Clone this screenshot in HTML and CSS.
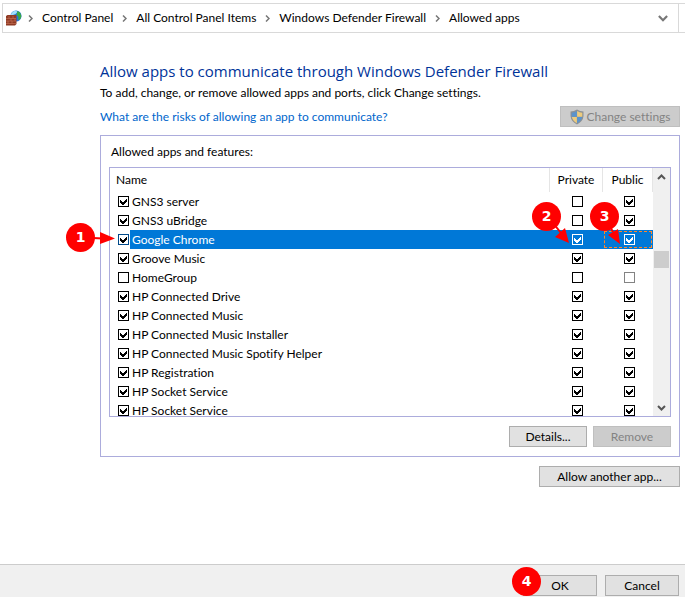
FILE: index.html
```html
<!DOCTYPE html>
<html lang="en">
<head>
<meta charset="utf-8">
<title>Allowed apps</title>
<link rel="stylesheet" href="styles.css">
</head>
<body>
<header class="topbar">
  <nav class="address" aria-label="Breadcrumb">
    <svg class="app-icon" viewBox="0 0 16 16" aria-hidden="true">
      <circle cx="10" cy="6" r="5.5" fill="#2474d8"/>
      <path d="M5.500 3Q7.500 .7 10 .6L11.500 2 9.500 4 7 5H4.800Z" fill="#9fe0fa"/>
      <path d="M11.500 1l2.500 1.500 1.400 3.500-1 3-2.400 1 .5-3-2-2Z" fill="#3aa845"/>
      <path d="M0 6l1.500-1h9v9L9 15.500H0Z" fill="#8f3a24"/>
      <path d="M0 8.500h10M0 11h10M0 13.500h10M3 6v2.500M7 6v2.500M5 8.500V11M9 8.500V11M2 11v2.500M6 11v2.500" stroke="#c9765a" stroke-width=".6"/>
    </svg>
    <svg class="sep" viewBox="0 0 5 7" aria-hidden="true"><path d="M1 .5l3 3-3 3"/></svg>
    <a href="#">Control Panel</a>
    <svg class="sep" viewBox="0 0 5 7" aria-hidden="true"><path d="M1 .5l3 3-3 3"/></svg>
    <a href="#">All Control Panel Items</a>
    <svg class="sep" viewBox="0 0 5 7" aria-hidden="true"><path d="M1 .5l3 3-3 3"/></svg>
    <a href="#">Windows Defender Firewall</a>
    <svg class="sep" viewBox="0 0 5 7" aria-hidden="true"><path d="M1 .5l3 3-3 3"/></svg>
    <a href="#">Allowed apps</a>
    <button class="history" aria-label="Previous locations"><svg viewBox="0 0 9 6" aria-hidden="true"><path d="M.8 .8l3.700 3.700L8.200 .8"/></svg></button>
  </nav>
  <div class="refresh"></div>
</header>

<main class="content">
  <h1>Allow apps to communicate through Windows Defender Firewall</h1>
  <p class="intro">To add, change, or remove allowed apps and ports, click Change settings.</p>
  <div class="risk-row">
    <a class="risk-link" href="#">What are the risks of allowing an app to communicate?</a>
    <button class="btn change" disabled>
      <svg class="shield" viewBox="0 0 16 16" aria-hidden="true">
        <path d="M8 .5Q11 2.500 14.500 2.500V7Q14 12.500 8 15.500 2 12.500 1.500 7V2.500Q5 2.500 8 .5Z" fill="#8b9095"/>
        <path d="M7.900 2Q5.500 3.500 2.700 3.700V7.800H7.900Z" fill="#5a93cc"/>
        <path d="M8.100 2Q10.500 3.500 13.300 3.700V7.800H8.100Z" fill="#edcb7d"/>
        <path d="M2.800 8.100H7.900V14.200Q3.700 12 2.800 8.100Z" fill="#edcb7d"/>
        <path d="M13.200 8.100H8.100V14.200Q12.300 12 13.200 8.100Z" fill="#5a93cc"/>
      </svg>
      Change settings
    </button>
  </div>

  <section class="panel">
    <h2>Allowed apps and features:</h2>
    <div class="list">
      <table>
        <thead><tr><th class="name">Name</th><th>Private</th><th>Public</th></tr></thead>
        <tbody>
          <tr><td class="name"><label><input type="checkbox" checked><span>GNS3 server</span></label></td><td><input type="checkbox" aria-label="Private"></td><td><input type="checkbox" aria-label="Public" checked></td></tr>
          <tr><td class="name"><label><input type="checkbox" checked><span>GNS3 uBridge</span></label></td><td><input type="checkbox" aria-label="Private"></td><td><input type="checkbox" aria-label="Public" checked></td></tr>
          <tr class="selected"><td class="name"><label><input type="checkbox" checked><span>Google Chrome</span></label></td><td><input type="checkbox" aria-label="Private" checked></td><td class="focus"><input type="checkbox" aria-label="Public" checked></td></tr>
          <tr><td class="name"><label><input type="checkbox" checked><span>Groove Music</span></label></td><td><input type="checkbox" aria-label="Private" checked></td><td><input type="checkbox" aria-label="Public" checked></td></tr>
          <tr><td class="name"><label><input type="checkbox"><span>HomeGroup</span></label></td><td><input type="checkbox" aria-label="Private"></td><td><input type="checkbox" aria-label="Public" disabled></td></tr>
          <tr><td class="name"><label><input type="checkbox" checked><span>HP Connected Drive</span></label></td><td><input type="checkbox" aria-label="Private" checked></td><td><input type="checkbox" aria-label="Public" checked></td></tr>
          <tr><td class="name"><label><input type="checkbox" checked><span>HP Connected Music</span></label></td><td><input type="checkbox" aria-label="Private" checked></td><td><input type="checkbox" aria-label="Public" checked></td></tr>
          <tr><td class="name"><label><input type="checkbox" checked><span>HP Connected Music Installer</span></label></td><td><input type="checkbox" aria-label="Private" checked></td><td><input type="checkbox" aria-label="Public" checked></td></tr>
          <tr><td class="name"><label><input type="checkbox" checked><span>HP Connected Music Spotify Helper</span></label></td><td><input type="checkbox" aria-label="Private" checked></td><td><input type="checkbox" aria-label="Public" checked></td></tr>
          <tr><td class="name"><label><input type="checkbox" checked><span>HP Registration</span></label></td><td><input type="checkbox" aria-label="Private" checked></td><td><input type="checkbox" aria-label="Public" checked></td></tr>
          <tr><td class="name"><label><input type="checkbox" checked><span>HP Socket Service</span></label></td><td><input type="checkbox" aria-label="Private" checked></td><td><input type="checkbox" aria-label="Public" checked></td></tr>
          <tr><td class="name"><label><input type="checkbox" checked><span>HP Socket Service</span></label></td><td><input type="checkbox" aria-label="Private" checked></td><td><input type="checkbox" aria-label="Public" checked></td></tr>
        </tbody>
      </table>
      <div class="scrollbar" aria-hidden="true">
        <svg viewBox="0 0 9 6"><path d="M1 5l3.500-3.500L8 5"/></svg>
        <div class="track"><div class="thumb"></div></div>
        <svg viewBox="0 0 9 6"><path d="M1 1l3.500 3.500L8 1"/></svg>
      </div>
    </div>
    <div class="panel-actions">
      <button class="btn">Details...</button>
      <button class="btn" disabled>Remove</button>
    </div>
    <svg class="arrow arrow-1" viewBox="0 0 24 14" aria-hidden="true"><path class="line" d="M0 6l10 .5"/><path d="M7 0l15 6.500L7 12Z"/></svg>
    <svg class="arrow arrow-2" viewBox="0 0 20 22" aria-hidden="true"><path class="line" d="M2 0l8 10"/><path d="M4 14l10-9 4 15Z"/></svg>
    <svg class="arrow arrow-3" viewBox="0 0 20 22" aria-hidden="true"><path class="line" d="M6 0l5 9"/><path d="M6 12l10-6 2 15Z"/></svg>
    <span class="badge badge-1">1</span>
    <span class="badge badge-2">2</span>
    <span class="badge badge-3">3</span>
  </section>
  <button class="btn another">Allow another app...</button>
</main>

<footer class="footer">
  <div class="ok-wrap"><button class="btn">OK</button><span class="badge badge-4">4</span></div>
  <button class="btn">Cancel</button>
</footer>
</body>
</html>
```
FILE: styles.css
```css
* { box-sizing: border-box; }

body {
  margin: 0;
  min-height: 100vh;
  display: flex;
  flex-direction: column;
  overflow: hidden;
  background: #fff;
  color: #000;
  font: 12px/16px Lato, "Open Sans", sans-serif;
  font-variant-ligatures: none;
}

button, input { font: inherit; font-variant-ligatures: none; color: inherit; margin: 0; }
a { color: inherit; text-decoration: none; }
svg { display: block; flex: none; }

/* Address bar */
.topbar { display: flex; padding: 3px 0 0 2px; }
.address {
  flex: 1;
  display: flex;
  align-items: center;
  gap: 9px;
  height: 30px;
  padding: 0 10px 0 3px;
  border: 1px solid #d9d9d9;
}
.refresh { width: 6px; border: solid #d9d9d9; border-width: 1px 0; }
.app-icon { width: 16px; height: 16px; margin-right: -3px; }
.sep { width: 5px; height: 7px; fill: none; stroke: #777; stroke-width: 1.5; }
.history { margin-left: auto; padding: 0; border: 0; background: none; }
.history svg { width: 10px; height: 7px; fill: none; stroke: #777; stroke-width: 2; }

/* Page */
.content {
  display: flex;
  flex-direction: column;
  padding: 27px 5px 0 100px;
}
h1 { margin: 0; font: 15px/22px "Open Sans", sans-serif; color: #039; }
.intro { margin: 3px 0 5px; }
.risk-row { display: flex; justify-content: space-between; align-items: flex-end; height: 21px; }
.risk-link { color: #06c; align-self: center; }

.btn {
  display: flex;
  align-items: center;
  justify-content: center;
  height: 21px;
  min-width: 74px;
  padding: 0 4px;
  border: 1px solid #adadad;
  background: #e1e1e1;
  white-space: nowrap;
}
.btn:disabled { background: #ccc; border-color: #bfbfbf; color: #838383; }
.shield { width: 16px; height: 16px; }
.change { min-width: 120px; gap: 1px; }

/* Allowed apps panel */
.panel {
  position: relative;
  margin-top: 8px;
  padding: 8px 8px 9px;
  border: 1px solid #acacdc;
}
h2 { margin: 0 0 7px 2px; font-size: 12px; line-height: 16px; font-weight: 400; }
.list {
  display: flex;
  height: 250px;
  border: 1px solid #acacdc;
  overflow: hidden;
}
table { flex: 1; align-self: flex-start; border-collapse: collapse; table-layout: fixed; }
th { height: 24px; padding: 0; font-weight: 400; width: 53px; border-right: 1px solid #e5e5e5; }
th:last-child { width: 50px; }
th.name { width: auto; padding-left: 6px; text-align: left; }
td { height: 19px; padding: 0 0 0 3px; text-align: center; }
td.name { text-align: left; padding-left: 8px; }
label { display: flex; align-items: center; gap: 1px; }
label span { flex: 1; height: 19px; line-height: 19px; padding-left: 2px; }

input[type="checkbox"] {
  appearance: none;
  display: block;
  flex: none;
  width: 11px;
  height: 11px;
  margin: 0 auto;
  border: 1px solid #000;
  background: #fff;
}
label input[type="checkbox"] { margin: 0; }
input[type="checkbox"]:checked { background: #fff url("data:image/svg+xml,%3Csvg xmlns='http://www.w3.org/2000/svg' viewBox='0 0 9 9'%3E%3Cpath d='M1 3v3l2 2h1l4-4V1L4 5H3Z' fill='%23000' shape-rendering='crispEdges'/%3E%3C/svg%3E"); }
input[type="checkbox"]:disabled { border-color: #838383; }

.selected td:not(.name), .selected span { background: #0078d7; color: #fff; }
.selected label input[type="checkbox"] { border-color: #00498a; }
.selected td:not(.name) input[type="checkbox"] {
  border-color: #fff;
  background: #0078d7 url("data:image/svg+xml,%3Csvg xmlns='http://www.w3.org/2000/svg' viewBox='0 0 9 9'%3E%3Cpath d='M1 3v3l2 2h1l4-4V1L4 5H3Z' fill='%23fff' shape-rendering='crispEdges'/%3E%3C/svg%3E");
}
.focus { outline: 1px dashed #ff8728; outline-offset: -2px; }

.scrollbar {
  display: flex;
  flex-direction: column;
  align-items: center;
  width: 17px;
  padding: 6px 0 5px;
  background: #f0f0f0;
}
.scrollbar svg { width: 9px; height: 6px; fill: none; stroke: #555; stroke-width: 2; }
.track { flex: 1; width: 15px; padding-top: 71px; }
.thumb { height: 17px; background: #cdcdcd; }

.panel-actions { display: flex; justify-content: flex-end; gap: 6px; margin-top: 9px; }
.panel-actions .btn { min-width: 78px; }
.another { align-self: flex-end; min-width: 141px; margin-top: 9px; }

/* Footer */
.footer {
  display: flex;
  justify-content: flex-end;
  gap: 8px;
  height: 33px;
  margin-top: auto;
  padding: 10px 6px 0;
  border-top: 1px solid #ccc;
  background: #f0f0f0;
}
.ok-wrap { position: relative; }

/* Numbered callouts */
.badge {
  position: absolute;
  width: 29px;
  height: 29px;
  border-radius: 50%;
  background: #f00;
  color: #fff;
  font: bold 14px/29px "DejaVu Sans", sans-serif;
  text-align: center;
}
.badge-1 { left: -35px; top: 87px; }
.badge-2 { right: 118px; top: 66px; }
.badge-3 { right: 60px; top: 66px; }
.badge-4 { left: -11px; top: -8px; }
.arrow { position: absolute; fill: #f00; }
.arrow .line { stroke: #f00; stroke-width: 2; }
.arrow-1 { left: -8px; top: 96px; width: 24px; height: 14px; }
.arrow-2 { right: 108px; top: 87px; width: 20px; height: 22px; }
.arrow-3 { right: 57px; top: 87px; width: 20px; height: 22px; }
```
